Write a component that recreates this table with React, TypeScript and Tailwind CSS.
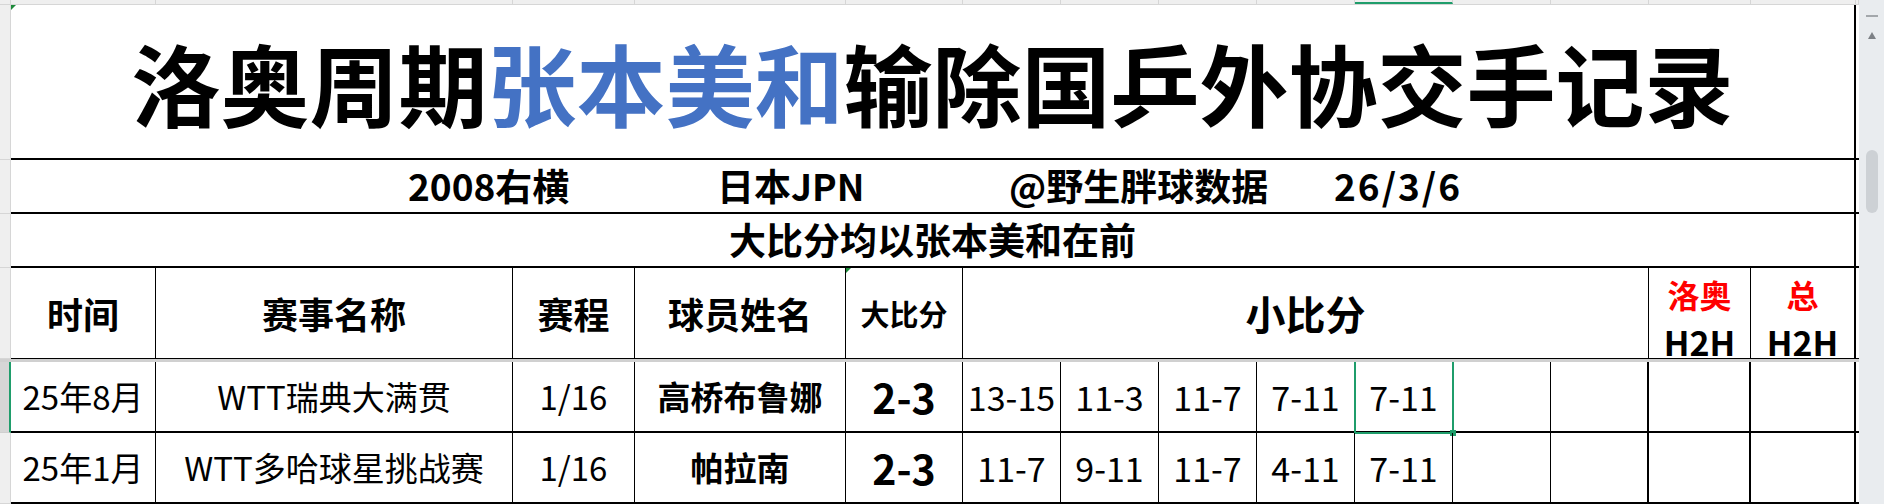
import React from 'react';

type Match = {
  time: string;
  event: string;
  round: string;
  player: string;
  score: string;
  games: string[];
};

const matches: Match[] = [
  {
    time: '25年8月',
    event: 'WTT瑞典大满贯',
    round: '1/16',
    player: '高桥布鲁娜',
    score: '2-3',
    games: ['13-15', '11-3', '11-7', '7-11', '7-11', '', ''],
  },
  {
    time: '25年1月',
    event: 'WTT多哈球星挑战赛',
    round: '1/16',
    player: '帕拉南',
    score: '2-3',
    games: ['11-7', '9-11', '11-7', '4-11', '7-11', '', ''],
  },
];

// column widths of the sheet, right border included
const colWidths = [145, 357, 122, 211, 117, 98, 98, 98, 98, 98, 98, 98, 102, 105, 3];

const RowHead = ({ active = false }: { active?: boolean }) => (
  <div
    className={
      active
        ? 'w-[11px] shrink-0 bg-[#d6d6d6] border-b border-b-[#cfcfcf] border-r-2 border-r-[#1f9d6b]'
        : 'w-[11px] shrink-0 bg-[#efefef] border-b border-r border-[#d6d6d6]'
    }
  />
);

const Corner = () => (
  <div className="absolute left-0 top-0 w-0 h-0 border-t-[5px] border-r-[5px] border-t-[#1d8a3a] border-r-transparent" />
);

const ColumnStrip = () => (
  <div className="flex h-[5px] bg-[#efefef] border-b border-[#d6d6d6]">
    <div className="w-[11px] shrink-0 border-r border-[#d6d6d6]" />
    {colWidths.map((w, i) => (
      <div
        key={i}
        style={{ width: w }}
        className={
          i === 9
            ? 'shrink-0 border-r border-[#d6d6d6] border-b-2 border-b-[#1f9d6b]'
            : 'shrink-0 border-r border-[#d6d6d6]'
        }
      />
    ))}
  </div>
);

const Selection = () => (
  <div className="absolute -left-[1px] top-0 w-[100px] h-[72px] border-2 border-t-0 border-[#1f9d6b]">
    <div className="absolute -right-[4px] -bottom-[4px] w-[6px] h-[6px] bg-[#1f9d6b]" />
  </div>
);

const DataRow = ({ m, active }: { m: Match; active: boolean }) => (
  <div className="flex h-[72px]">
    <RowHead active={active} />
    <div className="flex w-[1848px] border-b-2 border-black text-black">
      <div className="w-[145px] shrink-0 border-r border-black flex items-center justify-center text-[33px] leading-none">
        {m.time}
      </div>
      <div className="w-[357px] shrink-0 border-r border-black flex items-center justify-center text-[33px] leading-none">
        {m.event}
      </div>
      <div className="w-[122px] shrink-0 border-r border-black flex items-center justify-center text-[33px] leading-none">
        {m.round}
      </div>
      <div className="w-[211px] shrink-0 border-r border-black flex items-center justify-center text-[33px] font-bold leading-none">
        {m.player}
      </div>
      <div className="w-[117px] shrink-0 border-r border-black flex items-center justify-center text-[41px] font-bold leading-none">
        {m.score}
      </div>
      {m.games.map((g, i) => (
        <div
          key={i}
          className={
            i === 6
              ? 'relative w-[98px] shrink-0 border-r-2 border-black flex items-center justify-center text-[34px] leading-none'
              : 'relative w-[98px] shrink-0 border-r border-black flex items-center justify-center text-[34px] leading-none'
          }
        >
          {g}
          {active && i === 4 && <Selection />}
        </div>
      ))}
      <div className="w-[102px] shrink-0 border-r-2 border-black" />
      <div className="w-[105px] shrink-0 border-r-2 border-black" />
    </div>
  </div>
);

const Scrollbar = () => (
  <div className="relative w-[25px] h-[504px] shrink-0 bg-[#e9ecef]">
    <div className="absolute left-[7px] top-[15px] w-[12px] h-[2px] bg-[#a3a7ab]" />
    <div className="absolute left-[9px] top-[32px] w-0 h-0 border-l-[4px] border-r-[4px] border-b-[7px] border-l-transparent border-r-transparent border-b-[#7c8085]" />
    <div className="absolute left-[7px] top-[150px] w-[12px] h-[63px] rounded-full bg-[#cdd1d5]" />
  </div>
);

export default function App() {
  return (
    <div className="flex w-[1884px] h-[504px] overflow-hidden bg-white text-black font-['Noto_Sans_CJK_SC','Noto_Sans',sans-serif]">
      <div className="w-[1859px] shrink-0 flex flex-col">
        <ColumnStrip />

        {/* title */}
        <div className="flex h-[157px]">
          <RowHead />
          <div className="flex w-[1848px] border-b-2 border-black">
            <div className="relative w-[1845px] shrink-0 border-r-2 border-black flex items-center justify-center text-[89px] font-bold leading-none">
              <Corner />
              <span>洛奥周期</span>
              <span className="text-[#4472c4]">张本美和</span>
              <span>输除国乒外协交手记录</span>
            </div>
          </div>
        </div>

        {/* info line */}
        <div className="flex h-[55px]">
          <RowHead />
          <div className="flex w-[1848px] border-b-2 border-black">
            <div className="w-[1845px] shrink-0 border-r-2 border-black flex items-center pl-[397px] text-[37px] font-bold leading-none">
              <span className="w-[309px] shrink-0">2008右横</span>
              <span className="w-[292px] shrink-0">日本JPN</span>
              <span className="w-[325px] shrink-0">@野生胖球数据</span>
              <span className="tracking-[2px]">26/3/6</span>
            </div>
          </div>
        </div>

        {/* note */}
        <div className="flex h-[55px]">
          <RowHead />
          <div className="flex w-[1848px] border-b-2 border-black">
            <div className="w-[1845px] shrink-0 border-r-2 border-black flex items-center justify-center text-[37px] font-bold leading-none">
              大比分均以张本美和在前
            </div>
          </div>
        </div>

        {/* header */}
        <div className="flex h-[91px]">
          <RowHead />
          <div className="flex w-[1848px] border-b border-black font-bold">
            <div className="w-[145px] shrink-0 border-r border-black flex items-center justify-center text-[36px] leading-none">
              时间
            </div>
            <div className="w-[357px] shrink-0 border-r border-black flex items-center justify-center text-[36px] leading-none">
              赛事名称
            </div>
            <div className="w-[122px] shrink-0 border-r border-black flex items-center justify-center text-[36px] leading-none">
              赛程
            </div>
            <div className="w-[211px] shrink-0 border-r border-black flex items-center justify-center text-[36px] leading-none">
              球员姓名
            </div>
            <div className="relative w-[117px] shrink-0 border-r border-black flex items-center justify-center text-[29px] leading-none">
              <Corner />
              大比分
            </div>
            <div className="w-[686px] shrink-0 border-r border-black flex items-center justify-center text-[40px] leading-none">
              小比分
            </div>
            <div className="w-[102px] shrink-0 border-r border-black flex flex-col items-center justify-center gap-[15px] pt-[10px]">
              <span className="text-[32px] leading-none text-[#ff0000]">洛奥</span>
              <span className="text-[34px] leading-none">H2H</span>
            </div>
            <div className="w-[105px] shrink-0 border-r-2 border-black flex flex-col items-center justify-center gap-[15px] pt-[10px]">
              <span className="text-[32px] leading-none text-[#ff0000]">总</span>
              <span className="text-[34px] leading-none">H2H</span>
            </div>
          </div>
        </div>

        {/* frozen pane divider */}
        <div className="h-[3px] bg-[#d0d0d0]" />

        {matches.map((m, i) => (
          <DataRow key={i} m={m} active={i === 0} />
        ))}
      </div>
      <Scrollbar />
    </div>
  );
}
